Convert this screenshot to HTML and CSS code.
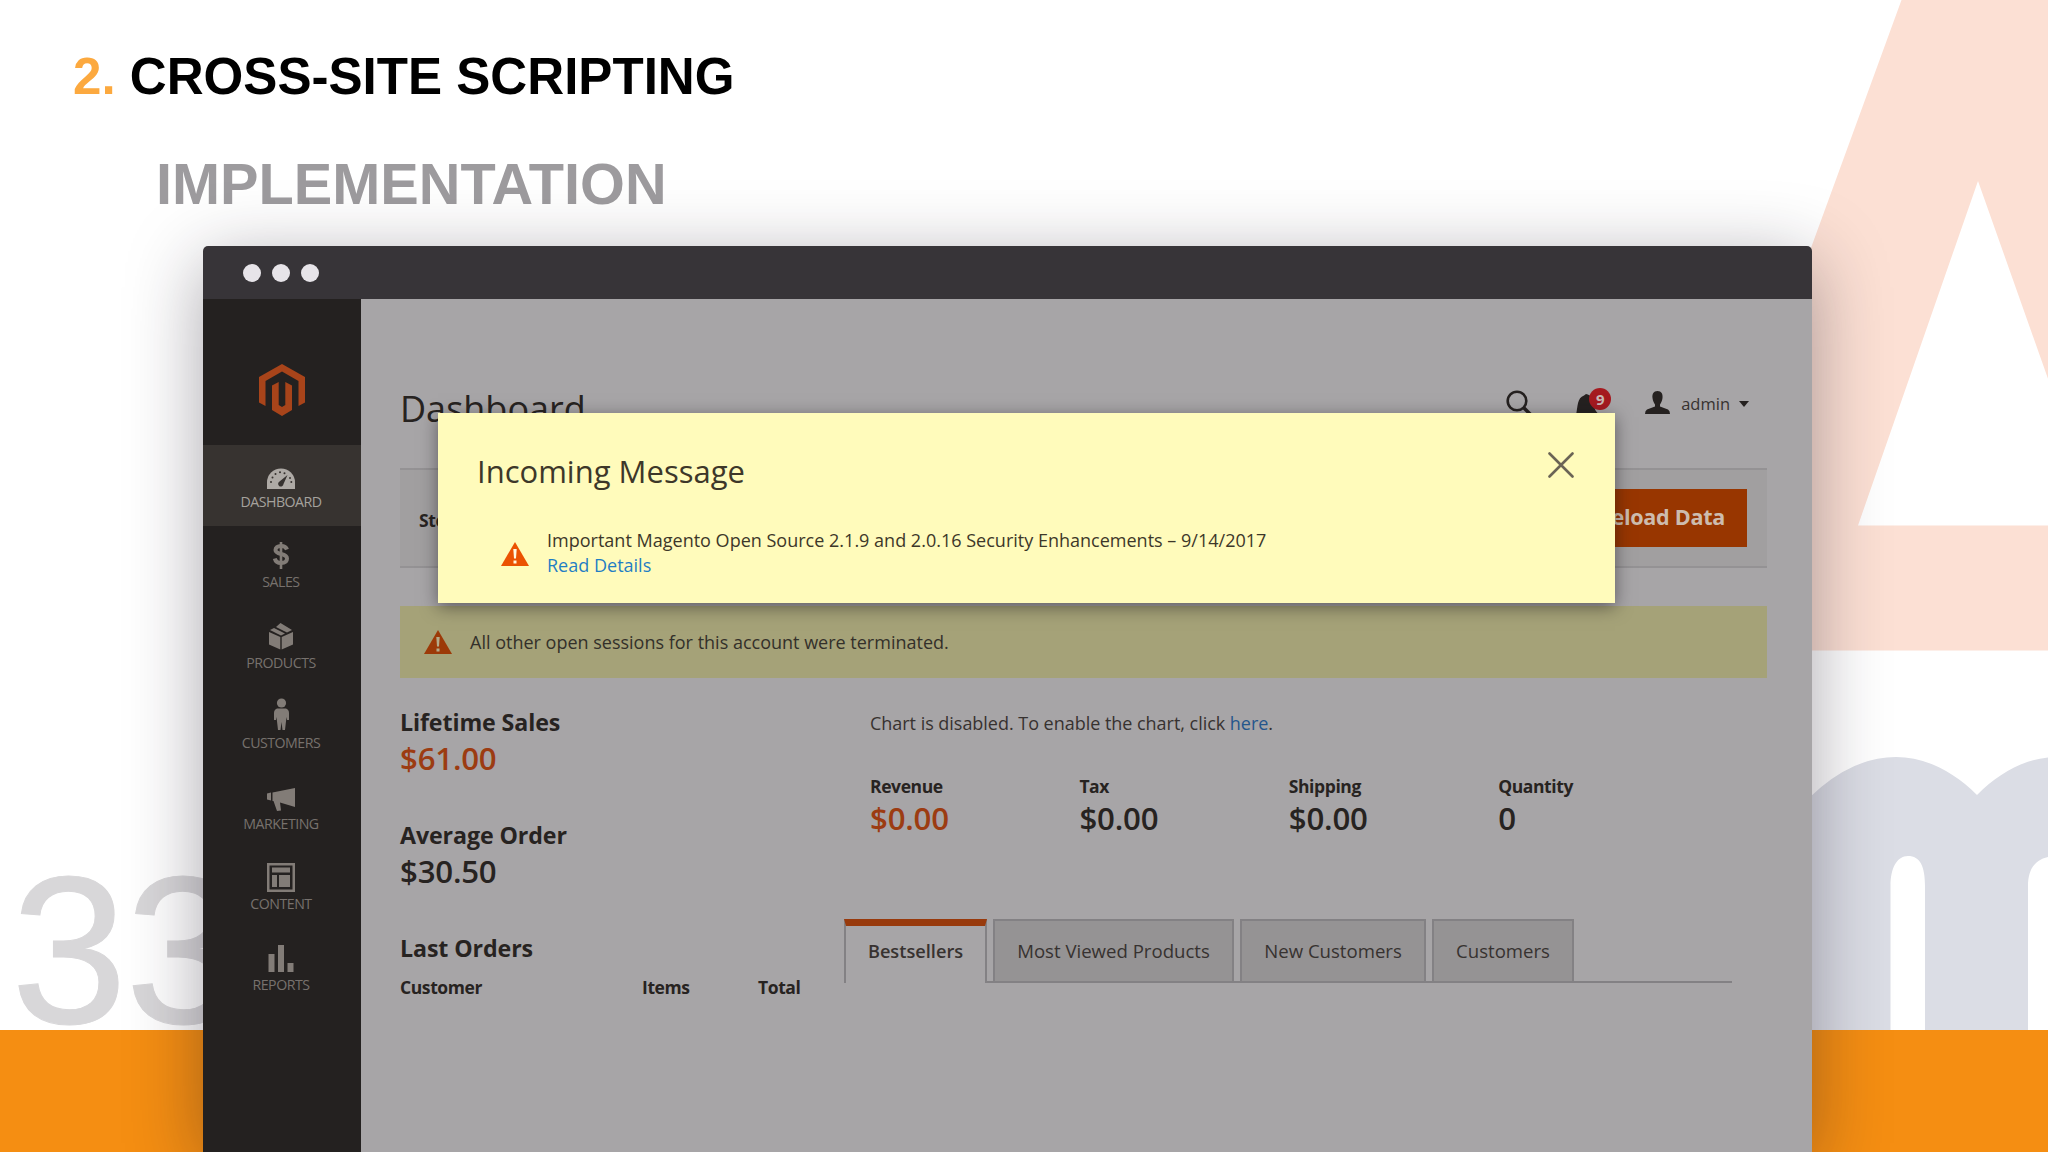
FILE: index.html
```
<!DOCTYPE html>
<html lang="en">
<head>
    <meta charset="UTF-8">
    <meta name="viewport" content="width=device-width, initial-scale=1.0">
    <title>Cross-Site Scripting</title>
    <link rel="stylesheet" href="styles.css">
</head>
<body>
    <div class="slide">
        <!-- background letters and footer strip -->
        <svg class="backdrop" viewBox="0 0 2048 1152">
            <path fill="#fce0d4" fill-rule="evenodd" d="M1901.500 0H2048V650.500H1664zM1978 181L1858 525.500H2100z"/>
            <path fill="#dbdde5" d="M1780 1030V832Q1835 757 1896 757C1925 757 1953 771 1977 795C2001 771 2028 757 2057 757V856C2038 856 2028 866 2028 886V1030H1925V886C1925 866 1920 856 1908 856C1897 856 1890.500 868 1890.500 886V1030z"/>
        </svg>
        <div class="footer"></div>
        <div class="pageno">33</div>

        <h1 class="title"><span>2.</span> CROSS-SITE SCRIPTING</h1>
        <h2 class="subtitle">IMPLEMENTATION</h2>

        <div class="window">
            <div class="titlebar">
                <i class="dot"></i>
                <i class="dot"></i>
                <i class="dot"></i>
            </div>
            <div class="app">
                <div class="sidebar">
                    <div class="logo">
                        <svg width="46" height="52" viewBox="0 0 46 52">
                            <path fill="#a8441a" d="M23 0L46 13V38.500L39.500 42V17L23 7.500L6.500 17V42L0 38.500V13zM19.700 18V41L23 43L26.300 41V18L33 21.500V46L23 52L13 46V21.500z"/>
                        </svg>
                    </div>
                    <div class="item active">
                        <svg viewBox="0 0 32 34">
                            <path d="M2 32V25.500A14 14 0 0 1 30 25.500V32z"/>
                            <circle class="tick" cx="6" cy="25" r="1"/>
                            <circle class="tick" cx="7.500" cy="20.500" r="1"/>
                            <circle class="tick" cx="10.500" cy="17" r="1"/>
                            <circle class="tick" cx="15" cy="15.300" r="1"/>
                            <circle class="tick" cx="19.500" cy="16.200" r="1"/>
                            <circle class="tick" cx="25" cy="21" r="1"/>
                            <circle class="tick" cx="26.300" cy="25" r="1"/>
                            <path class="tick" d="M22.500 18L18.500 27A2.700 2.700 0 1 1 14.500 24.500z"/>
                        </svg>
                        <span>DASHBOARD</span>
                    </div>
                    <div class="item">
                        <svg viewBox="0 0 32 34">
                            <path class="line" d="M22 12.500C21 9.500 18.500 9 16 9C12.500 9 10.500 10.700 10.500 13C10.500 18.500 22 15.500 22 21.500C22 24.500 19.500 26 16 26C12.500 26 10.500 24.500 9.800 21.500"/>
                            <path d="M14.700 5H17.300V32H14.700z"/>
                        </svg>
                        <span>SALES</span>
                    </div>
                    <div class="item">
                        <svg viewBox="0 0 32 34">
                            <path d="M4 14L15.300 19V31.500L4 26.500zM28 14L16.700 19V31.500L28 26.500zM5 12L9 10L20 15.500L16 17.500zM11 9L15.500 5L27 12L22 14.500z"/>
                        </svg>
                        <span>PRODUCTS</span>
                    </div>
                    <div class="item">
                        <svg viewBox="0 0 32 34">
                            <circle cx="16.500" cy="5" r="4.600"/>
                            <path d="M12 10.500H21Q24 11.500 24 15V22H22L21.500 19L20 32H17.500L16.500 24L15.500 32H13L11.500 19L11 22H9V15Q9 11.500 12 10.500z"/>
                        </svg>
                        <span>CUSTOMERS</span>
                    </div>
                    <div class="item">
                        <svg viewBox="0 0 32 34">
                            <path d="M2 14.500L6 13.500V21.500L2 20.500zM7.500 13.500L30 9V28L15 23.500L16 31.500L12 32L8.500 22H7.500z"/>
                        </svg>
                        <span>MARKETING</span>
                    </div>
                    <div class="item">
                        <svg viewBox="0 0 32 34">
                            <path fill-rule="evenodd" d="M2 4H30V33H2zM4.500 6.500V30.500H27.500V6.500z"/>
                            <path d="M7 8.500H25V13.500H7zM7 16H12V28H7zM14 16H25V28H14z"/>
                        </svg>
                        <span>CONTENT</span>
                    </div>
                    <div class="item">
                        <svg viewBox="0 0 32 34">
                            <path d="M3.500 14H9.500V32H3.500zM13 5H19V32H13zM22.500 23H28.500V32H22.500z"/>
                        </svg>
                        <span>REPORTS</span>
                    </div>
                </div>

                <div class="main">
                    <div class="head">
                        <div class="pagetitle">Dashboard</div>
                        <div class="tools">
                            <svg class="search" width="28" height="28" viewBox="0 0 28 28">
                                <circle cx="11" cy="11" r="9.300" fill="none" stroke="#252120" stroke-width="2.600"/>
                                <path d="M18 18L26 26" stroke="#252120" stroke-width="3.500"/>
                            </svg>
                            <div class="bell">
                                <svg width="24" height="26" viewBox="0 0 24 26">
                                    <path fill="#252120" d="M10 0C15 1 18 5 18 10C18 16 21 18 23 21H0C2 12 1 4 8 1.500z"/>
                                </svg>
                                <b class="badge">9</b>
                            </div>
                            <svg class="user" width="25" height="23" viewBox="0 0 25 23">
                                <path fill="#252120" d="M12.500 0C16.500 0 18 3 17.500 7C17.200 10 16 12 15 13.500V15.500L23 18.500Q25 19.500 25 23H0Q0 19.500 2 18.500L10 15.500V13.500C9 12 7.800 10 7.500 7C7 3 8.500 0 12.500 0z"/>
                            </svg>
                            <span class="admin">admin</span>
                            <i class="caret"></i>
                        </div>
                    </div>

                    <div class="panel">
                        <b>Store View:</b>
                        <button type="button" class="reload">Reload Data</button>
                    </div>

                    <div class="notice">
                        <svg width="28" height="24" viewBox="0 0 28 24">
                            <path fill="#9c3a08" d="M14 0L28 24H0z"/>
                            <path fill="#b5ab8a" d="M12.300 7H15.700L15 16.500H13zM12.500 18.500H15.500V21.500H12.500z"/>
                        </svg>
                        <span>All other open sessions for this account were terminated.</span>
                    </div>

                    <div class="columns">
                        <div class="left">
                            <div class="label">Lifetime Sales</div>
                            <div class="value orange">$61.00</div>
                            <div class="label next">Average Order</div>
                            <div class="value">$30.50</div>
                            <div class="label next">Last Orders</div>
                            <div class="orders">
                                <b>Customer</b>
                                <b>Items</b>
                                <b>Total</b>
                            </div>
                        </div>
                        <div class="right">
                            <p class="chart">Chart is disabled. To enable the chart, click <a>here</a>.</p>
                            <div class="totals">
                                <div><b>Revenue</b><div class="value orange">$0.00</div></div>
                                <div><b>Tax</b><div class="value">$0.00</div></div>
                                <div><b>Shipping</b><div class="value">$0.00</div></div>
                                <div><b>Quantity</b><div class="value">0</div></div>
                            </div>
                            <div class="tabs">
                                <div class="tab current">Bestsellers</div>
                                <div class="tab most">Most Viewed Products</div>
                                <div class="tab new">New Customers</div>
                                <div class="tab cust">Customers</div>
                                <div class="rest"></div>
                            </div>
                        </div>
                    </div>
                </div>
            </div>

            <div class="modal">
                <div class="modalhead">
                    <span>Incoming Message</span>
                    <svg width="26" height="26" viewBox="0 0 26 26">
                        <path d="M1.500 1.500L24.500 24.500M24.500 1.500L1.500 24.500" stroke="#6b6455" stroke-width="2.600" stroke-linecap="round"/>
                    </svg>
                </div>
                <div class="message">
                    <svg width="28" height="24" viewBox="0 0 28 24">
                        <path fill="#eb5202" d="M14 0L28 24H0z"/>
                        <path fill="#fff8e0" d="M12.300 7H15.700L15 16.500H13zM12.500 18.500H15.500V21.500H12.500z"/>
                    </svg>
                    <div>
                        Important Magento Open Source 2.1.9 and 2.0.16 Security Enhancements – 9/14/2017<br>
                        <a>Read Details</a>
                    </div>
                </div>
            </div>
        </div>
    </div>
</body>
</html>
```
FILE: styles.css
```
body{
    margin: 0;
    overflow: hidden;
    background-color: white;
    font-family: "Open Sans", "Noto Sans", sans-serif;
}
.slide{
    position: relative;
    width: 2048px;
    height: 1152px;
    overflow: hidden;
    display: flex;
    flex-direction: column;
}
.backdrop{
    position: absolute;
    left: 0;
    top: 0;
    width: 2048px;
    height: 1152px;
}
.footer{
    position: absolute;
    left: 0;
    right: 0;
    bottom: 0;
    height: 122px;
    background-color: #f58e12;
}
.pageno{
    position: absolute;
    left: 11px;
    top: 848px;
    font-family: "Liberation Sans", Arial, sans-serif;
    font-size: 209px;
    line-height: 206px;
    letter-spacing: -2px;
    color: #d8d7d9;
    -webkit-text-stroke: 1px #d8d7d9;
}
.title, .subtitle{
    position: relative;
    font-family: "Liberation Sans", Arial, sans-serif;
    font-weight: bold;
}
.title{
    margin: 47px 0 0 73px;
    font-size: 51.1px;
    line-height: 60px;
    color: black;
}
.title span{
    color: #fca93f;
}
.subtitle{
    margin: 43px 0 28px 156px;
    font-size: 57.7px;
    line-height: 68px;
    color: #9d9b9e;
}

/* browser window */
.window{
    position: relative;
    width: 1609px;
    height: 906px;
    flex-shrink: 0;
    margin-left: 203px;
    border-radius: 5px 5px 0 0;
    box-shadow: 0 16px 75px rgba(30, 22, 38, 0.38);
}
.titlebar{
    height: 53px;
    display: flex;
    align-items: center;
    gap: 11px;
    padding-left: 39.500px;
    background-color: #373438;
    border-radius: 5px 5px 0 0;
}
.dot{
    width: 18px;
    height: 18px;
    border-radius: 50%;
    background-color: #e7e4e9;
}
.app{
    display: flex;
    height: 853px;
}

/* left menu */
.sidebar{
    width: 158px;
    background-color: #242120;
}
.logo{
    height: 81px;
    padding: 65px 0 0 55.500px;
}
.logo svg{
    display: block;
}
.item{
    height: 80.6px;
    padding-right: 2px;
    box-sizing: border-box;
    display: flex;
    flex-direction: column;
    align-items: center;
    font-size: 14.2px;
    line-height: 20px;
    letter-spacing: -0.5px;
    color: #77716d;
}
.item svg{
    width: 32px;
    height: 34px;
    margin-top: 11.500px;
    fill: #827c77;
}
.item span{
    margin-top: 1px;
}
.active{
    background-color: #373330;
    color: #a5a29d;
}
.active svg{
    fill: #aeaaa5;
}
.item .tick{
    fill: #373330;
}
.item .line{
    fill: none;
    stroke: #827c77;
    stroke-width: 4;
}

/* page */
.main{
    flex: 1;
    padding: 85px 45px 0 39px;
    background-color: #a7a5a7;
    color: #272321;
}
.head{
    display: flex;
    justify-content: space-between;
    height: 50px;
}
.pagetitle{
    font-size: 36px;
    line-height: 50px;
}
.tools{
    display: flex;
    padding: 6px 18px 0 0;
}
.search{
    margin: 0 42px 0 0;
}
.bell{
    position: relative;
    width: 24px;
    height: 26px;
    margin: 4px 45px 0 0;
}
.badge{
    position: absolute;
    left: 13px;
    top: -6px;
    width: 22px;
    height: 22px;
    border-radius: 50%;
    background-color: #a51a20;
    color: #c9b8b6;
    font-size: 15px;
    line-height: 22px;
    text-align: center;
}
.user{
    margin-top: 1px;
}
.admin{
    margin: 2px 9px 0 11px;
    font-size: 16.500px;
    line-height: 24px;
    color: #373230;
}
.caret{
    margin-top: 11px;
    height: 0;
    border: 5px solid transparent;
    border-top: 6px solid #252120;
    border-bottom: 0;
}
.panel{
    display: flex;
    justify-content: space-between;
    align-items: center;
    height: 100px;
    margin-top: 34px;
    padding: 0 20px 0 19px;
    box-sizing: border-box;
    border-top: 2px solid #949294;
    border-bottom: 2px solid #949294;
    background-color: #a19fa0;
    font-size: 17.500px;
}
.panel b{
    padding-top: 3px;
    letter-spacing: -0.4px;
}
.reload{
    height: 58px;
    padding: 0 22px 3px;
    border: 0;
    background-color: #983600;
    color: #cdbcae;
    font-family: inherit;
    font-size: 21.600px;
    font-weight: 700;
    letter-spacing: -0.3px;
}
.notice{
    display: flex;
    align-items: center;
    height: 72px;
    margin-top: 38px;
    padding-left: 24px;
    background-color: #a5a278;
    font-size: 18px;
    color: #33302a;
}
.notice span{
    margin: 0 0 0 18px;
}
.columns{
    display: flex;
    padding-top: 28px;
}
.left{
    width: 444px;
}
.label{
    font-size: 23.200px;
    font-weight: 700;
    line-height: 32px;
    letter-spacing: -0.1px;
}
.next{
    margin-top: 41px;
}
.value{
    font-size: 31.200px;
    font-weight: 600;
    line-height: 40px;
    letter-spacing: -0.2px;
}
.orange{
    color: #9c3c12;
}
.orders{
    display: grid;
    grid-template-columns: 242px 116px auto;
    margin-top: 11px;
    font-size: 17.500px;
    line-height: 24px;
    letter-spacing: -0.4px;
}
.right{
    width: 888px;
}
.chart{
    margin: 5px 0 38px 26px;
    font-size: 18px;
    line-height: 25px;
    letter-spacing: -0.03px;
    color: #373230;
}
.chart a{
    color: #25568c;
}
.totals{
    display: grid;
    grid-template-columns: repeat(4, 209.4px);
    margin-left: 26px;
    font-size: 17.500px;
    line-height: 24px;
    letter-spacing: -0.4px;
}
.tabs{
    display: flex;
    height: 64px;
    margin-top: 81px;
    font-size: 18.600px;
    line-height: 60px;
    text-align: center;
    color: #373230;
}
.tab{
    box-sizing: border-box;
    margin-right: 6px;
    border: 2px solid #838184;
    background-color: #959394;
    position: relative;
}
/* joins the tabs with the bottom line */
.tab::after{
    content: "";
    position: absolute;
    left: 100%;
    bottom: -2px;
    width: 8px;
    height: 2px;
    background-color: #838184;
}
.current{
    width: 143px;
    border-top: 7px solid #983a0c;
    border-bottom: 0;
    background: none;
    font-size: 18.200px;
    font-weight: 600;
    line-height: 51px;
}
.current::after{
    bottom: 0;
}
.most{
    width: 241px;
}
.new{
    width: 186px;
}
.cust{
    width: 142px;
    margin-right: 0;
}
.rest{
    width: 158px;
    border-bottom: 2px solid #838184;
}

/* message popup */
.modal{
    position: absolute;
    left: 235px;
    top: 167px;
    width: 1177px;
    height: 190px;
    box-sizing: border-box;
    padding: 36px 41px 0 39px;
    background-color: #fffbbb;
    box-shadow: 0 4px 16px rgba(20, 16, 20, 0.5);
    color: #3d3729;
}
.modalhead{
    display: flex;
    justify-content: space-between;
    font-size: 31px;
    line-height: 44px;
}
.modalhead svg{
    margin-top: 3px;
}
.message{
    display: flex;
    margin-top: 34.500px;
    padding-left: 24px;
    font-size: 18.030px;
    line-height: 25px;
}
.message svg{
    margin: 14px 18px 0 0;
}
.message a{
    color: #1f7ec4;
}
```
